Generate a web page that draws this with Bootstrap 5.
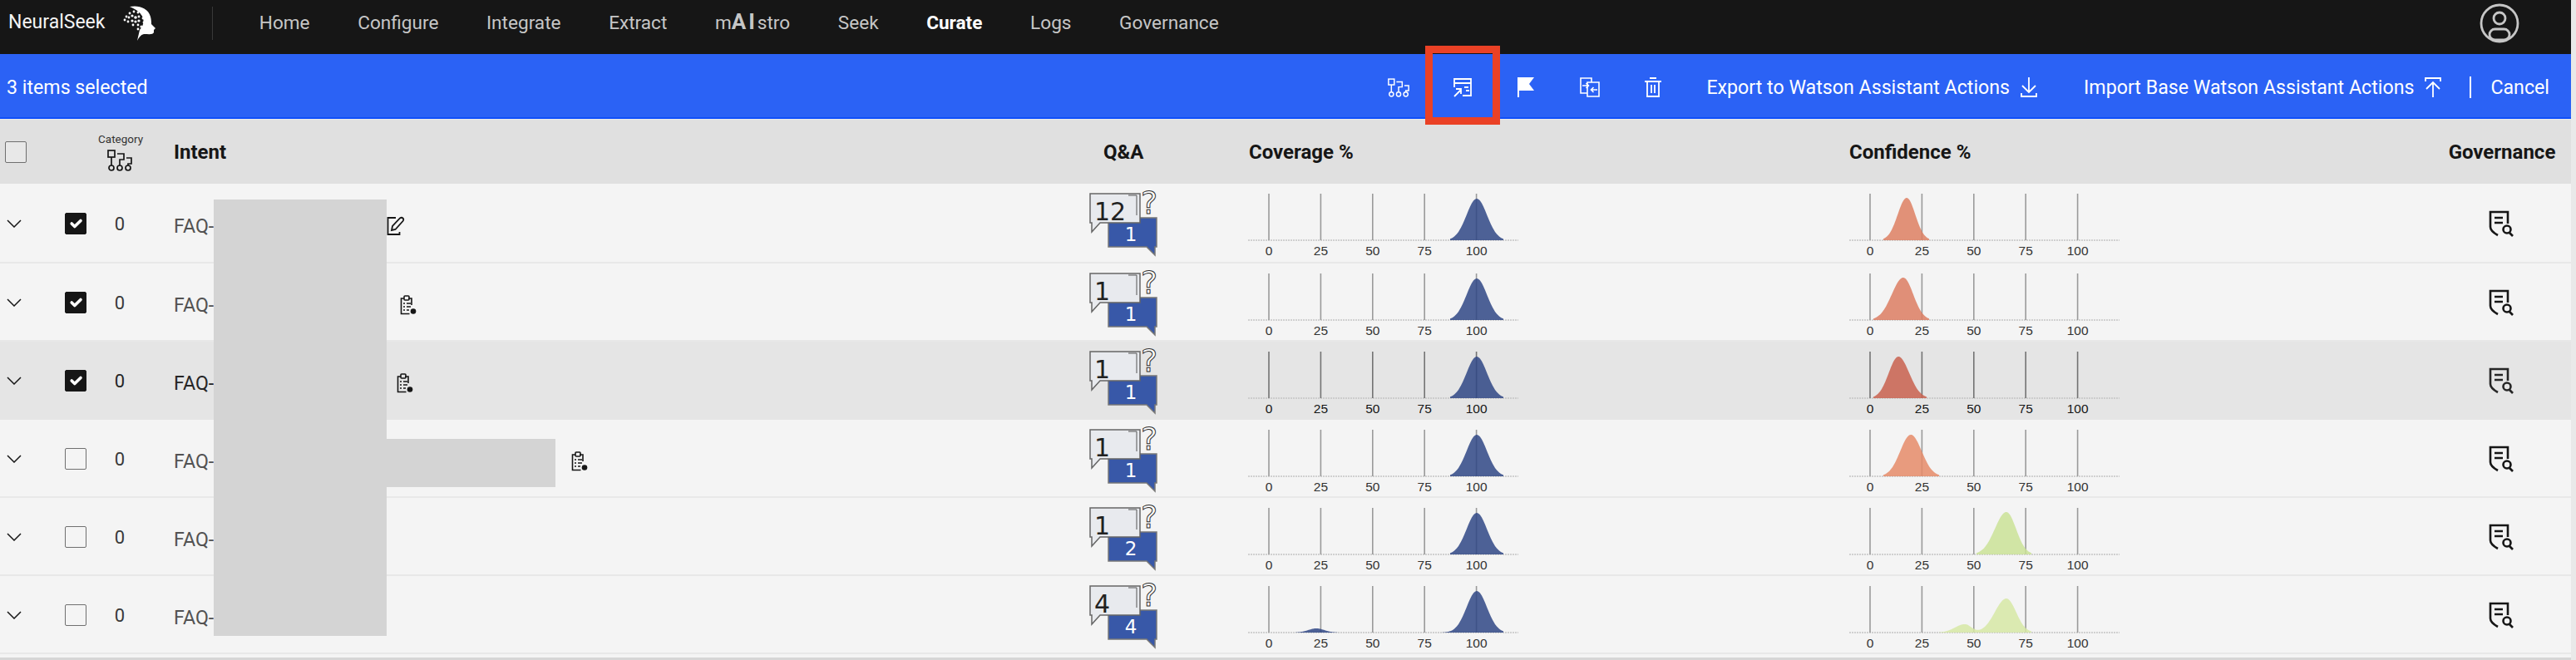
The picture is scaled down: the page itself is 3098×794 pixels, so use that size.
<!DOCTYPE html>
<html lang="en">
<head>
    <meta charset="UTF-8">
    <meta name="viewport" content="width=device-width, initial-scale=1.0">
    <title>NeuralSeek - Curate</title>
    <link rel="stylesheet" href="https://cdn.jsdelivr.net/npm/bootstrap@5.3.0/dist/css/bootstrap.min.css">
    <script defer src="https://cdn.jsdelivr.net/npm/bootstrap@5.3.0/dist/js/bootstrap.bundle.min.js"></script>
    <style>
        html, body { height: 794px; overflow: hidden; }
        body {
            background: #e9e9e9;
            padding-right: 6px;
            font-family: Roboto, "Liberation Sans", sans-serif;
            font-size: 23.2px;
            color: #161616;
        }
        svg { display: block; }

        /* top bar */
        .ns-top { height: 65px; background: #161616; padding: 0 0 10px; }
        .ns-brand { color: #f4f4f4; font-size: 23px; padding-left: 10px; width: 148px; }
        .ns-divider { width: 1px; height: 40px; background: #393939; margin-left: 67px; margin-right: 27px; }
        .ns-top .nav-link { color: #c6c6c6; font-size: 22.6px; padding: 0 28.8px; }
        .ns-top .nav-link b { font-size: 26px; letter-spacing: 3px; line-height: 1; }
        .ns-top .nav-link.active { color: #fff; font-weight: 700; }
        .ns-user { margin-right: 62px; }

        /* selection toolbar */
        .ns-bar { height: 78px; padding-top: 4px; background: #2b62f5; border-bottom: 2px solid #0f4ffa; color: #fff; margin-bottom: 1px; }
        .ns-count { padding-left: 8px; }
        .ns-bar .btn { color: #fff; font-size: 23.2px; border: 0; border-radius: 0; padding: 0; }
        .ns-tool { width: 76.5px; height: 60px; }
        .ns-action { height: 60px; gap: 12px; }
        .ns-export { margin-left: 26px; margin-right: 55px; }
        .ns-sep { width: 2px; height: 26px; background: #fff; margin-left: 33px; margin-right: 23px; }
        .ns-cancel { margin-right: 26px; }

        /* table */
        .ns-wrap { background: #f4f4f4; }
        .ns-table { table-layout: fixed; width: 3092px; margin: 0; --bs-table-bg: transparent; --bs-table-hover-bg: transparent; }
        .ns-table th, .ns-table td { padding: 0; vertical-align: middle; }
        .ns-table thead th { height: 77px; background: #e0e0e0; border: 0; font-weight: 700; font-size: 24px; color: #161616; }
        .ns-table tbody td { height: 94px; padding-top: 2px; background: #f4f4f4; border-bottom: 2px solid #e8e8e8; color: #525252; }
        .ns-table tbody tr:first-child td { height: 95px; }
        .ns-table tbody tr.ns-hover td { background: #e5e5e5; border-bottom-color: #e5e5e5; color: #262626; }
        .ns-table tbody td.ns-top-cell { vertical-align: top; padding-top: 0; }
        .ns-table th.ns-intent { padding-left: 39px; }
        .ns-table tbody td.ns-name { padding-left: 39px; padding-top: 8px; }
        .ns-table th.ns-qa-head { padding-left: 27px; }
        .ns-table th.ns-cov-head { padding-left: 1px; }
        .ns-table .ns-cat { font-size: 13.5px; font-weight: 400; line-height: 17px; margin-bottom: 4px; color: #333; }
        .ns-table tbody td.ns-zero { color: #393939; font-size: 22px; }
        .ns-pin { color: #161616; }
        .ns-box.form-check-input { width: 26px; height: 26px; margin: 0; border: 1.5px solid #6f6f6f; border-radius: 2px; background-color: #f4f4f4; display: block; }
        .ns-box.form-check-input:checked { background-color: #161616; border-color: #161616; }
        .ns-head-box.form-check-input { background-color: #e8e8e8; margin-left: 6px; }
        .ns-qa { margin-left: 10px; }
        .ns-chart { margin-top: 12px; }
        .ns-chart text { font-family: "Liberation Sans", Arial, sans-serif; font-size: 15.5px; fill: #333; text-anchor: middle; }
        .ns-tick { stroke: #9a9a9a; stroke-width: 1.6; }
        .ns-hover .ns-tick { stroke: #737373; }
        .ns-hover .ns-chart text { fill: #161616; }
        .ns-axis { stroke: #c4c4c4; stroke-width: 1.5; stroke-dasharray: 2 1; }
        .ns-table .ns-gov { padding-right: 4px; color: #161616; }
        .ns-table tbody td.ns-gov { color: #161616; }
        .ns-bottom { height: 8px; background: #f4f4f4; border-bottom: 4px solid #d6d6d6; }

        /* things lying over the page */
        .ns-redact { position: absolute; background: #d4d4d4; }
        .ns-redact-a { left: 257px; top: 240px; width: 208px; height: 525px; }
        .ns-redact-b { left: 465px; top: 528px; width: 203px; height: 58px; }
        .ns-callout { position: absolute; left: 1714px; top: 55px; width: 90px; height: 95px; border: 9px solid #ea4125; }
    </style>
</head>
<body class="position-relative">
    <svg width="0" height="0" class="position-absolute">
        <symbol id="i-tree" viewBox="0 0 30 26" fill="none" stroke="currentColor" stroke-width="1.700">
            <rect x="1" y="1" width="8" height="8"/>
            <path d="M5 9v10M12 5h8v7h-5v7M23 10h6v7h-4v2"/>
            <circle cx="5" cy="22" r="3"/><circle cx="15" cy="22" r="3"/><circle cx="25" cy="22" r="3"/>
        </symbol>
        <symbol id="i-gov" viewBox="0 0 32 32" fill="none" stroke="currentColor" stroke-width="2.600">
            <path d="M23 16V2H2v18q0 5 9 10"/>
            <path d="M7 9h10M7 15h10"/>
            <circle cx="22" cy="23" r="4.500"/><path d="M25 27l4 4"/>
        </symbol>
        <symbol id="i-clip" viewBox="0 0 20 24" fill="none" stroke="currentColor" stroke-width="1.600">
            <path d="M5 4H1.500v18.500h10M14 12V4h-4"/>
            <rect x="5" y="1" width="6" height="5" rx="1"/>
            <path d="M4 10h2M8 10h5M4 14h2M8 14h5M4 18h2M8 18h3"/>
            <circle cx="16" cy="19.500" r="3.300" fill="currentColor" stroke="none"/>
        </symbol>
        <symbol id="i-edit" viewBox="0 0 22 24" fill="none" stroke="currentColor" stroke-width="1.800">
            <path d="M11 2H1.500v20h14v-3"/>
            <path d="M6 17l1-5L16 2.500q2-1.500 3.500 0t0 3.500L10.500 16z"/>
        </symbol>
    </svg>

    <nav class="navbar ns-top flex-nowrap justify-content-start">
        <span class="ns-brand">NeuralSeek</span>
        <svg width="40" height="42" viewBox="0 0 40 42" fill="#fff">
            <path d="M8 1c10-2 22 1 25 12 1 4 1 7 1 9l5 5-2 2 0 3c-1 3-6 2-12 2-4 1-6 4-8 8l3-13c7-8 8-20-12-28z"/>
            <circle cx="4" cy="13" r="1.400"/><circle cx="8" cy="9" r="1.400"/><circle cx="13" cy="7" r="1.400"/><circle cx="18" cy="8" r="1.400"/>
            <circle cx="23" cy="10" r="1.400"/><circle cx="2" cy="17" r="1.400"/><circle cx="7" cy="14" r="1.400"/><circle cx="11" cy="12" r="1.600"/>
            <circle cx="15" cy="14" r="1.800"/><circle cx="19" cy="13" r="1.400"/><circle cx="24" cy="15" r="1.400"/><circle cx="6" cy="19" r="1.400"/>
            <circle cx="11" cy="18" r="1.600"/><circle cx="15" cy="19" r="1.600"/><circle cx="19" cy="18" r="1.600"/><circle cx="25" cy="20" r="1.400"/>
            <circle cx="12" cy="23" r="1.400"/><circle cx="18" cy="23" r="1.400"/><circle cx="22" cy="25" r="1.600"/><circle cx="18" cy="28" r="1.400"/>
        </svg>
        <span class="ns-divider"></span>
        <ul class="navbar-nav flex-row me-auto">
            <li class="nav-item"><a class="nav-link" href="#">Home</a></li>
            <li class="nav-item"><a class="nav-link" href="#">Configure</a></li>
            <li class="nav-item"><a class="nav-link" href="#">Integrate</a></li>
            <li class="nav-item"><a class="nav-link" href="#">Extract</a></li>
            <li class="nav-item"><a class="nav-link" href="#">m<b>AI</b>stro</a></li>
            <li class="nav-item"><a class="nav-link" href="#">Seek</a></li>
            <li class="nav-item"><a class="nav-link active" href="#">Curate</a></li>
            <li class="nav-item"><a class="nav-link" href="#">Logs</a></li>
            <li class="nav-item"><a class="nav-link" href="#">Governance</a></li>
        </ul>
        <svg class="ns-user" width="48" height="48" viewBox="0 0 48 48" fill="none" stroke="#c6c6c6" stroke-width="2.800">
            <circle cx="24" cy="24" r="22"/>
            <circle cx="24" cy="18" r="7"/>
            <rect x="12" y="31" width="24" height="13" rx="6.500"/>
        </svg>
    </nav>

    <div class="ns-bar d-flex align-items-center">
        <span class="ns-count me-auto">3 items selected</span>
        <button class="btn ns-tool d-flex align-items-center justify-content-center" type="button" aria-label="Category">
            <svg width="26" height="23"><use href="#i-tree"/></svg>
        </button>
        <button class="btn ns-tool d-flex align-items-center justify-content-center" type="button" aria-label="Move">
            <svg width="24" height="24" viewBox="0 0 24 24" fill="none" stroke="#fff" stroke-width="1.800">
                <path d="M2 12V2h20v20H12M2 7h20M14 12h5M16 16h4"/>
                <path d="M2 23l8-8M4 14h6v6"/>
            </svg>
        </button>
        <button class="btn ns-tool d-flex align-items-center justify-content-center" type="button" aria-label="Flag">
            <svg width="22" height="24" viewBox="0 0 22 24" fill="#fff"><path d="M1 0h20l-6 8 6 8H3v8H1z"/></svg>
        </button>
        <button class="btn ns-tool d-flex align-items-center justify-content-center" type="button" aria-label="Merge">
            <svg width="24" height="24" viewBox="0 0 24 24" fill="none" stroke="#fff" stroke-width="1.600">
                <path d="M9 19H1V1h13v5M9 6h14v17H9z"/>
                <path d="M3 10h7M7.500 7l3 3-3 3M21 15h-7M16.500 12l-3 3 3 3"/>
            </svg>
        </button>
        <button class="btn ns-tool d-flex align-items-center justify-content-center" type="button" aria-label="Delete">
            <svg width="22" height="24" viewBox="0 0 22 24" fill="none" stroke="#fff" stroke-width="1.800">
                <path d="M7 1h8M1 5h20M4 5v18h14V5M9 9v10M13 9v10"/>
            </svg>
        </button>
        <button class="btn ns-action ns-export d-flex align-items-center" type="button">
            Export to Watson Assistant Actions
            <svg width="22" height="24" viewBox="0 0 22 24" fill="none" stroke="#fff" stroke-width="1.800">
                <path d="M11 0v18M3 10l8 8 8-8M2 19v4h18v-4"/>
            </svg>
        </button>
        <button class="btn ns-action d-flex align-items-center" type="button">
            Import Base Watson Assistant Actions
            <svg width="22" height="24" viewBox="0 0 22 24" fill="none" stroke="#fff" stroke-width="1.800">
                <path d="M11 24V6M3 14l8-8 8 8M2 5V1h18v4"/>
            </svg>
        </button>
        <span class="ns-sep"></span>
        <button class="btn ns-cancel" type="button">Cancel</button>
    </div>

    <div class="ns-wrap">
        <table class="table ns-table">
            <colgroup>
                <col style="width:62px"><col style="width:56px"><col style="width:52px"><col style="width:1130px">
                <col style="width:201px"><col style="width:723px"><col style="width:706px"><col style="width:162px">
            </colgroup>
            <thead>
                <tr>
                    <th><input class="form-check-input ns-box ns-head-box" type="checkbox" aria-label="Select all"></th>
                    <th></th>
                    <th class="text-center">
                        <div class="ns-cat">Category</div>
                        <svg class="mx-auto" width="30" height="26"><use href="#i-tree"/></svg>
                    </th>
                    <th class="ns-intent">Intent</th>
                    <th class="ns-qa-head">Q&amp;A</th>
                    <th class="ns-cov-head">Coverage %</th>
                    <th>Confidence %</th>
                    <th class="text-center ns-gov">Governance</th>
                </tr>
            </thead>
            <tbody id="rows"></tbody>
        </table>
        <div class="ns-bottom"></div>
    </div>

    <div class="ns-redact ns-redact-a"></div>
    <div class="ns-redact ns-redact-b"></div>
    <div class="ns-callout"></div>

    <script>
        // peak = [center, left reach, right reach, height], all px in the chart's own coordinates
        const blue = [275, 32, 32, 50];
        const data = [
            { q: "12", a: "1", on: true,  icon: "edit", x: 465, cov: [blue], conf: [[69, 28, 27, 51]], fill: "#dd7f62" },
            { q: "1",  a: "1", on: true,  icon: "clip", x: 480, cov: [blue], conf: [[65, 36, 31, 51]], fill: "#dc7c62" },
            { q: "1",  a: "1", on: true,  icon: "clip", x: 476, hover: true, cov: [blue], conf: [[59, 30, 34, 50]], fill: "#c9614f" },
            { q: "1",  a: "1", on: false, icon: "clip", x: 686, cov: [blue], conf: [[74, 33, 34, 50]], fill: "#e58b69" },
            { q: "1",  a: "2", on: false, cov: [blue], conf: [[189, 36, 30, 51]], fill: "#cae297" },
            { q: "4",  a: "4", on: false, cov: [blue, [82, 25, 25, 5]], conf: [[189, 36, 30, 41], [139, 31, 20, 10]], fill: "#d6e8a4" }
        ];

        function curve(peaks) {
            // sum of one-sided gaussians, closed along the baseline at y = 56
            const xs = peaks.map(p => p[0] - p[1]).concat(peaks.map(p => p[0] + p[2]));
            const from = Math.min(...xs), to = Math.max(...xs);
            let d = "M" + from + " 56";
            for (let x = from; x <= to; x += 1) {
                let h = 0;
                peaks.forEach(p => {
                    const s = (x < p[0] ? p[1] : p[2]) / 2.6;
                    h += p[3] * Math.exp(-Math.pow(x - p[0], 2) / (2 * s * s));
                });
                d += "L" + x + " " + (56 - h).toFixed(1);
            }
            return d + "L" + to + " 56Z";
        }

        function chart(peaks, fill, opacity) {
            let ticks = "";
            [0, 25, 50, 75, 100].forEach((n, i) => {
                const x = 25 + i * 62.4;
                ticks += `<line class="ns-tick" x1="${x}" x2="${x}" y1="0" y2="56"/><text x="${x}" y="74">${n}</text>`;
            });
            return `<svg class="ns-chart" width="325" height="80" viewBox="0 0 325 80">
                <line class="ns-axis" x1="0" x2="325" y1="56" y2="56"/>${ticks}
                <path d="${curve(peaks)}" fill="${fill}" fill-opacity="${opacity}"/>
            </svg>`;
        }

        function qaIcon(q, a) {
            // viewBox starts above the bubble so the tall "?" keeps its whole line box
            return `<svg class="ns-qa" width="84" height="88" viewBox="0 -8 84 88">
                <path d="M23 33h58v35H79v10l-10-10H23z" fill="#3858a8" stroke="#777" stroke-width="1.500"/>
                <text x="50" y="61" fill="#fff" font-family="DejaVu Sans, sans-serif" font-size="23" text-anchor="middle">${a}</text>
                <path d="M1 4h60v35H13L3 50V39H1z" fill="#e8eaee" stroke="#666" stroke-width="1.500"/>
                <path d="M47 6h10v24" fill="none" stroke="#555" stroke-width="1"/>
                <text x="6" y="36" fill="#222" font-family="DejaVu Sans, sans-serif" font-size="30">${q}</text>
                <text x="72" y="28" fill="#fff" stroke="#333" stroke-width="1" font-family="DejaVu Sans, sans-serif" font-size="38" text-anchor="middle">?</text>
            </svg>`;
        }

        const rows = document.getElementById("rows");
        data.forEach(r => {
            const tr = document.createElement("tr");
            if (r.hover) tr.className = "ns-hover";
            // the name itself sits under the redaction, so only its width matters
            const name = r.icon
                ? `<span class="flex-shrink-0" style="width:${r.x - 209}px">FAQ-</span><svg class="ns-pin flex-shrink-0" width="22" height="24"><use href="#i-${r.icon}"/></svg>`
                : "<span>FAQ-</span>";
            tr.innerHTML = `
                <td><svg class="ms-2" width="18" height="10" viewBox="0 0 18 10" fill="none" stroke="#161616" stroke-width="1.500"><path d="M1 1l8 8 8-8"/></svg></td>
                <td><input class="form-check-input ns-box ms-3" type="checkbox" ${r.on ? "checked" : ""} aria-label="Select row"></td>
                <td class="text-center ns-zero">0</td>
                <td class="ns-name"><div class="d-flex align-items-center">${name}</div></td>
                <td class="ns-top-cell">${qaIcon(r.q, r.a)}</td>
                <td class="ns-top-cell">${chart(r.cov, "#2f4785", .85)}</td>
                <td class="ns-top-cell">${chart(r.conf, r.fill, .85)}</td>
                <td class="ns-gov"><svg class="mx-auto" width="32" height="32"><use href="#i-gov"/></svg></td>`;
            rows.appendChild(tr);
        });
    </script>
</body>
</html>
